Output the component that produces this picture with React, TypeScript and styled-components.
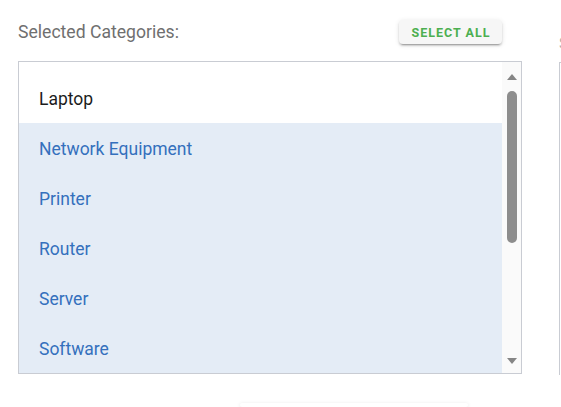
import React from "react";
import styled, { createGlobalStyle } from "styled-components";

const Global = createGlobalStyle`
  html, body { margin: 0; padding: 0; background: #ffffff; overflow: hidden; }
  body { font-family: Roboto, "Liberation Sans", Arial, sans-serif; }
  * { box-sizing: border-box; }
`;

const Page = styled.div`
  width: 561px;
  height: 407px;
  overflow: hidden;
  display: flex;
  gap: 36px;
  padding: 20px 0 0 18px;
`;

const Column = styled.div`
  width: 504px;
  flex: none;
  display: flex;
  flex-direction: column;
`;

const Header = styled.div`
  height: 25px;
  display: flex;
  align-items: center;
  justify-content: space-between;
  padding-right: 20px;
  margin-bottom: 17px;
`;

const Label = styled.span`
  font-size: 17.6px;
  color: #6f6f6f;
`;

const SelectAll = styled.button`
  height: 24px;
  width: 103px;
  border: none;
  border-radius: 4px;
  background: #f6f6f6;
  color: #4caf50;
  font-family: Roboto, "Liberation Sans", Arial, sans-serif;
  font-weight: 700;
  font-size: 12.5px;
  letter-spacing: 1px;
  padding: 0 0 0 1px;
  box-shadow: 0 3px 1px -2px rgba(0,0,0,0.2), 0 2px 2px 0 rgba(0,0,0,0.14), 0 1px 5px 0 rgba(0,0,0,0.12);
`;

const ListBox = styled.div`
  height: 313px;
  border: 1px solid #c9ccd3;
  display: flex;
`;

const Items = styled.ul`
  flex: 1;
  list-style: none;
  margin: 0;
  padding: 11px 0 0 0;
  overflow: hidden;
`;

const Item = styled.li<{ $selected?: boolean }>`
  height: 50px;
  flex: none;
  display: flex;
  align-items: center;
  padding: 2px 0 0 20px;
  font-size: 17.5px;
  color: ${(p) => (p.$selected ? "#3470bd" : "#1c1c1c")};
  background: ${(p) => (p.$selected ? "#e4ecf6" : "transparent")};
`;

const Scrollbar = styled.div`
  width: 19px;
  flex: none;
  background: #fafafa;
  display: flex;
  flex-direction: column;
  align-items: center;
  padding: 12px 0 9px;
`;

const Arrow = styled.div<{ $down?: boolean }>`
  width: 0;
  height: 0;
  flex: none;
  border-left: 5px solid transparent;
  border-right: 5px solid transparent;
  ${(p) => (p.$down ? "border-top: 6px solid #858585;" : "border-bottom: 6px solid #858585;")}
`;

const Thumb = styled.div`
  width: 10px;
  height: 152px;
  flex: none;
  border-radius: 5px;
  background: #8d8d8d;
  margin-top: 11px;
`;

const Spacer = styled.div`
  flex: 1;
`;

const Footer = styled.div`
  height: 30px;
  margin-top: 29px;
  margin-left: 222px;
  width: 228px;
  background: #ffffff;
  border-radius: 4px;
  box-shadow: 0 1px 4px rgba(0,0,0,0.12);
`;

const SideColumn = styled.div`
  width: 40px;
  flex: none;
  display: flex;
  flex-direction: column;
  margin-left: 1px;
`;

const SideLabel = styled.div`
  height: 42px;
  font-size: 16px;
  color: #b0b0b0;
  padding-top: 19px;
  line-height: 10px;
  overflow: hidden;
`;

const SideBox = styled.div`
  height: 313px;
  border-left: 1px solid #c9ccd3;
  border-top: 1px solid #c9ccd3;
`;

const categories = ["Laptop", "Network Equipment", "Printer", "Router", "Server", "Software"];

export default function App() {
  return (
    <>
      <Global />
      <Page>
        <Column>
          <Header>
            <Label>Selected Categories:</Label>
            <SelectAll>SELECT ALL</SelectAll>
          </Header>
          <ListBox>
            <Items>
              {categories.map((c, i) => (
                <Item key={c} $selected={i > 0}>
                  {c}
                </Item>
              ))}
            </Items>
            <Scrollbar>
              <Arrow />
              <Thumb />
              <Spacer />
              <Arrow $down />
            </Scrollbar>
          </ListBox>
          <Footer />
        </Column>
        <SideColumn>
          <SideLabel>S</SideLabel>
          <SideBox />
        </SideColumn>
      </Page>
    </>
  );
}
